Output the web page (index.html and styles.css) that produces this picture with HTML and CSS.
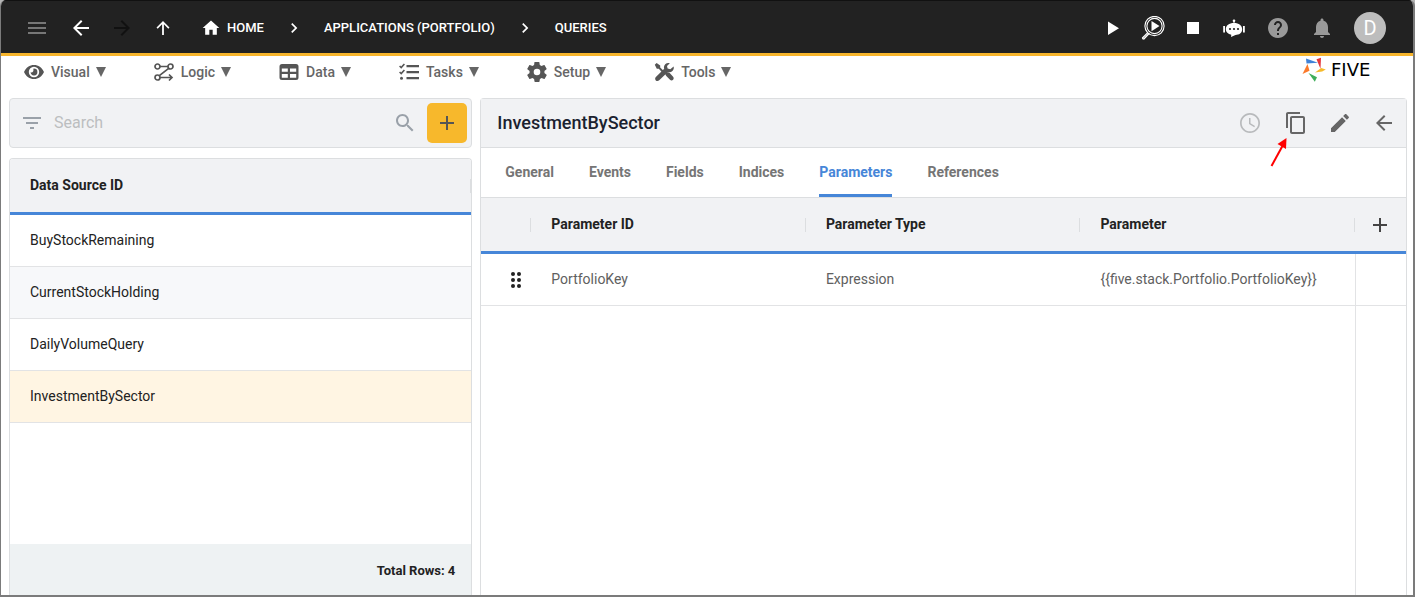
FILE: index.html
```html
<!DOCTYPE html>
<html lang="en">
<head>
<meta charset="utf-8">
<title>Five - Queries</title>
<link rel="stylesheet" href="styles.css">
</head>
<body>
<div class="app">
  <header class="topbar">
    <button class="icon-btn muted" aria-label="Menu"><svg viewBox="0 0 24 24"><path d="M3 18h18v-2H3v2zm0-5h18v-2H3v2zm0-7v2h18V6H3z"/></svg></button>
    <div class="history">
      <button class="icon-btn" aria-label="Back"><svg viewBox="0 0 24 24"><path d="M20 11H7.800l5.600-5.600L12 4l-8 8 8 8 1.400-1.400L7.800 13H20v-2z"/></svg></button>
      <button class="icon-btn off" aria-label="Forward" disabled><svg viewBox="0 0 24 24"><path d="M12 4l-1.410 1.410L16.170 11H4v2h12.170l-5.580 5.590L12 20l8-8z"/></svg></button>
      <button class="icon-btn" aria-label="Up"><svg viewBox="0 0 24 24"><path d="M5.500 11.500l1.200 1.200 4.400-4.400V19h1.800V8.300l4.400 4.400 1.200-1.200L12 5z"/></svg></button>
    </div>
    <nav class="crumbs" aria-label="Breadcrumb">
      <a href="#" class="home"><svg viewBox="0 0 24 24"><path d="M10 20v-6h4v6h5v-8h3L12 3 2 12h3v8z"/></svg>HOME</a>
      <svg class="sep" viewBox="0 0 24 24"><path d="M10 6L8.590 7.410 13.170 12l-4.580 4.590L10 18l6-6z"/></svg>
      <a href="#">APPLICATIONS (PORTFOLIO)</a>
      <svg class="sep" viewBox="0 0 24 24"><path d="M10 6L8.590 7.410 13.170 12l-4.580 4.590L10 18l6-6z"/></svg>
      <a href="#">QUERIES</a>
    </nav>
    <div class="run-tools">
      <button class="icon-btn" aria-label="Run"><svg viewBox="0 0 24 24"><path d="M7 5.500v13.500l11-6.750z"/></svg></button>
      <button class="icon-btn" aria-label="Inspect"><svg viewBox="0 0 24 24"><g fill="none" stroke="#fff"><circle cx="13.500" cy="10" r="9.600" stroke-width="1.100"/><circle cx="13.500" cy="10" r="7.600" stroke-width="1.100"/><path d="M6.800 16.600L1.200 22.200M8.300 17.200L2.600 23.200M1.200 22.200l1.400 1" stroke-width="1.300"/></g><path d="M10.500 5v10.200l8-5.100z"/></svg></button>
      <button class="icon-btn" aria-label="Stop"><svg viewBox="0 0 24 24"><path d="M6 6h12v12H6z"/></svg></button>
    </div>
    <div class="user-tools">
      <button class="icon-btn" aria-label="Assistant"><svg viewBox="0 0 24 24"><circle cx="12" cy="4.800" r="1.300"/><path d="M11.500 5h1v3h-1z"/><path d="M12 7c5 0 8.200 2.500 8.200 6.300S17 19 13.500 19L9 21l.3-2.200C6 18 3.800 16 3.800 13.200 3.800 9.500 7 7 12 7zM1.200 10h1.800v6.500H1.200zM21 10h1.800v6.500H21z"/><g fill="#222"><circle cx="8" cy="13" r="1.100"/><circle cx="12" cy="13" r="1.100"/><circle cx="16" cy="13" r="1.100"/></g></svg></button>
      <button class="icon-btn soft" aria-label="Help"><svg viewBox="0 0 24 24"><path d="M12 2C6.480 2 2 6.480 2 12s4.480 10 10 10 10-4.480 10-10S17.520 2 12 2zm1 17h-2v-2h2v2zm2.070-7.750l-.9.920C13.450 12.900 13 13.500 13 15h-2v-.5c0-1.100.45-2.100 1.170-2.830l1.240-1.260c.37-.36.59-.86.59-1.410 0-1.100-.9-2-2-2s-2 .9-2 2H8c0-2.210 1.790-4 4-4s4 1.790 4 4c0 .88-.36 1.680-.93 2.250z"/></svg></button>
      <button class="icon-btn soft" aria-label="Notifications"><svg viewBox="0 0 24 24"><path d="M12 22c1.100 0 2-.9 2-2h-4c0 1.100.89 2 2 2zm6-6v-5c0-3.070-1.640-5.640-4.500-6.320V4c0-.83-.67-1.500-1.500-1.500s-1.500.67-1.500 1.500v.68C7.630 5.360 6 7.920 6 11v5l-2 2v1h16v-1l-2-2z"/></svg></button>
      <button class="avatar" aria-label="Account">D</button>
    </div>
  </header>

  <div class="menubar">
    <nav class="menus" aria-label="Main">
      <button class="menu"><svg viewBox="0 0 20 20"><path fill-rule="evenodd" d="M10 3c4.300 0 8 2.500 10 7-2 4.500-5.700 7-10 7S2 14.500 0 10c2-4.500 5.700-7 10-7zm0 1.800a5.200 5.200 0 1 0 0 10.400 5.200 5.200 0 0 0 0-10.400z"/><path d="M10 6.600A3.400 3.400 0 1 1 6.600 10.300c1.900.6 3.400-1.200 2.700-3.600z"/></svg>Visual<span class="caret"></span></button>
      <button class="menu"><svg viewBox="0 0 20 20"><g fill="none" stroke="#555" stroke-width="1.700"><circle cx="3.500" cy="4.500" r="2.500"/><circle cx="16.500" cy="4.500" r="2.500"/><circle cx="3.500" cy="15.500" r="2.500"/><path d="M6 4.500h8M14.700 6.300L5.300 13.700M6 15.500h12M15 12.500l3 3-3 3"/></g></svg>Logic<span class="caret"></span></button>
      <button class="menu"><svg viewBox="0 0 20 20"><path fill-rule="evenodd" d="M3 2h14a2.500 2.500 0 0 1 2.500 2.500v11A2.500 2.500 0 0 1 17 18H3a2.500 2.500 0 0 1-2.500-2.500v-11A2.500 2.500 0 0 1 3 2zM2.800 6.500v3.200h6V6.500zm8.200 0v3.200h6.200V6.500zM2.800 12v3.700h6V12zM11 12v3.700h6.200V12z"/></svg>Data<span class="caret"></span></button>
      <button class="menu"><svg viewBox="0 0 20 20"><path d="M7.500 3H20v2.200H7.500zM7.500 9H20v2.200H7.500zM7.500 15H20v2.200H7.500z"/><circle cx="2.500" cy="16.300" r="1.500"/><path fill="none" stroke="#555" stroke-width="1.600" d="M.6 4l1.600 1.500L5.400 2M.6 10l1.600 1.500L5.400 8"/></svg>Tasks<span class="caret"></span></button>
      <button class="menu"><svg viewBox="2 2 20 20"><path d="M19.400 13c0-.3.100-.6.100-1s0-.7-.1-1l2.100-1.700c.2-.1.300-.4.100-.6l-2-3.500c-.1-.2-.4-.3-.6-.2l-2.500 1c-.5-.4-1.100-.7-1.700-1l-.4-2.600c0-.2-.2-.4-.5-.4h-4c-.2 0-.5.200-.5.400L9.100 5c-.6.300-1.200.6-1.700 1l-2.500-1c-.2-.1-.5 0-.6.200l-2 3.500c-.1.200-.1.500.1.600L4.600 11c0 .3-.1.700-.1 1s0 .7.100 1l-2.200 1.700c-.2.100-.2.400-.1.600l2 3.500c.1.200.4.300.6.200l2.500-1c.5.400 1.100.7 1.700 1l.4 2.600c0 .2.300.4.500.4h4c.3 0 .5-.2.500-.4l.4-2.600c.6-.3 1.200-.6 1.700-1l2.500 1c.2.100.5 0 .6-.2l2-3.500c.1-.2.100-.5-.1-.6zM12 15.300a3.300 3.300 0 1 1 0-6.600 3.300 3.300 0 0 1 0 6.600z"/></svg>Setup<span class="caret"></span></button>
      <button class="menu"><svg viewBox="0 0 20 20"><path d="M.8 2.800L2.600 1l3.600 2.400v2l3.600 3.500-1.500 1.500L4.800 6.800h-2zM11 11.500l2-1.200c1-.3 2 0 2.700.7l3.400 3.700c.8.900.8 2.200 0 3-.9.900-2.200.9-3.100 0L12.300 14c-.7-.7-.9-1.700-1.300-2.500z"/><path d="M19.600 4.500c.5 1.700 0 3.300-1.200 4.400-1.200 1.200-2.900 1.500-4.500 1L5.200 18.300c-1 1-2.500 1-3.400.1s-.9-2.400.1-3.400L10.200 6.700c-.6-1.600-.2-3.300 1-4.500C12.500 1 14.200.6 15.800 1.200L13 4l.6 2.600 2.700.7z"/></svg>Tools<span class="caret"></span></button>
    </nav>
    <a href="#" class="brand"><svg viewBox="0 0 24 25"><path fill="#3f82d8" d="M4 1.500l12 4.200-11.500.8z"/><path fill="#e4383b" d="M14.500 2.200L19 .8l-.5 11z"/><path fill="#fb7a2b" d="M5.500 7l2 6.800L.5 17z"/><path fill="#f6ba2c" d="M19.200 11l4.600 1.400-3.600 2.200-7.200 1z"/><path fill="#3fae5a" d="M6.500 16l8.500 4.200-2.200 4.500z"/></svg>FIVE</a>
  </div>

  <main class="workspace">
    <section class="left">
      <form class="search" role="search">
        <svg viewBox="0 0 24 24"><path d="M10 18h4v-2h-4v2zM3 6v2h18V6H3zm3 7h12v-2H6v2z"/></svg>
        <input type="search" placeholder="Search" aria-label="Search">
        <svg viewBox="0 0 24 24"><path d="M15.500 14h-.79l-.28-.27C15.410 12.590 16 11.110 16 9.500 16 5.910 13.090 3 9.500 3S3 5.910 3 9.500 5.910 16 9.500 16c1.610 0 3.090-.59 4.230-1.570l.27.280v.79l5 4.990L20.490 19l-4.990-5zm-6 0C7.010 14 5 11.990 5 9.500S7.010 5 9.500 5 14 7.010 14 9.500 11.990 14 9.500 14z"/></svg>
        <button type="button" class="add" aria-label="Add query"><svg viewBox="0 0 24 24"><path d="M19 13h-6v6h-2v-6H5v-2h6V5h2v6h6z"/></svg></button>
      </form>
      <div class="panel list">
        <table>
          <thead><tr><th scope="col" class="divided">Data Source ID</th></tr></thead>
          <tbody>
            <tr><td>BuyStockRemaining</td></tr>
            <tr class="alt"><td>CurrentStockHolding</td></tr>
            <tr><td>DailyVolumeQuery</td></tr>
            <tr class="selected"><td>InvestmentBySector</td></tr>
          </tbody>
        </table>
        <footer class="total">Total Rows: 4</footer>
      </div>
    </section>

    <section class="panel detail">
      <header class="detail-head">
        <h1>InvestmentBySector</h1>
        <button class="icon-btn faint" aria-label="History"><svg viewBox="0 0 24 24"><path d="M11.990 2C6.470 2 2 6.480 2 12s4.470 10 9.990 10C17.520 22 22 17.520 22 12S17.520 2 11.990 2zM12 20.300c-4.600 0-8.300-3.700-8.300-8.300S7.400 3.700 12 3.700s8.300 3.700 8.300 8.300-3.700 8.300-8.300 8.300zM12.500 7H11v6l5.250 3.150.75-1.230-4.500-2.670z"/></svg></button>
        <button class="icon-btn copy" aria-label="Copy"><svg viewBox="0 0 24 24"><path d="M16 1H4c-1.100 0-2 .9-2 2v14h2V3h12V1zm3 4H8c-1.100 0-2 .9-2 2v14c0 1.100.9 2 2 2h11c1.100 0 2-.9 2-2V7c0-1.100-.9-2-2-2zm0 16H8V7h11v14z"/></svg><svg class="pointer" viewBox="0 0 18 30"><path d="M1.500 29L13 8" stroke="#f00" stroke-width="2"/><path fill="#f00" d="M16.500 1L7.500 7l8.500 5z"/></svg></button>
        <button class="icon-btn" aria-label="Edit"><svg viewBox="0 0 24 24"><path d="M3 17.250V21h3.750L17.810 9.940l-3.750-3.750L3 17.250zM20.710 7.040c.39-.39.39-1.020 0-1.410l-2.340-2.340c-.39-.39-1.020-.39-1.410 0l-1.830 1.830 3.750 3.750 1.830-1.830z"/></svg></button>
        <button class="icon-btn" aria-label="Close"><svg viewBox="0 0 24 24"><path d="M20 11H7.830l5.590-5.590L12 4l-8 8 8 8 1.410-1.410L7.830 13H20v-2z"/></svg></button>
      </header>
      <nav class="tabs" role="tablist">
        <button role="tab">General</button>
        <button role="tab">Events</button>
        <button role="tab">Fields</button>
        <button role="tab">Indices</button>
        <button role="tab" class="active" aria-selected="true">Parameters</button>
        <button role="tab">References</button>
      </nav>
      <table class="params">
        <thead><tr>
          <th class="narrow divided"></th>
          <th scope="col" class="divided">Parameter ID</th>
          <th scope="col" class="divided">Parameter Type</th>
          <th scope="col" class="divided">Parameter</th>
          <th class="narrow last"><button class="icon-btn plus" aria-label="Add parameter"><svg viewBox="0 0 24 24"><path d="M19 13h-6v6h-2v-6H5v-2h6V5h2v6h6z"/></svg></button></th>
        </tr></thead>
        <tbody><tr>
          <td class="narrow grip"><svg viewBox="0 0 24 24"><circle cx="9" cy="6" r="2"/><circle cx="15" cy="6" r="2"/><circle cx="9" cy="12" r="2"/><circle cx="15" cy="12" r="2"/><circle cx="9" cy="18" r="2"/><circle cx="15" cy="18" r="2"/></svg></td>
          <td>PortfolioKey</td>
          <td>Expression</td>
          <td>{{five.stack.Portfolio.PortfolioKey}}</td>
          <td class="narrow action"></td>
        </tr></tbody>
      </table>
      <div class="rest"></div>
    </section>
  </main>
</div>
</body>
</html>
```

FILE: styles.css
```css
*, *::before, *::after { box-sizing: border-box; }

body {
  margin: 0;
  background: #b5b5b5;
  color: #222;
  font: 14px/20px Roboto, "Liberation Sans", sans-serif;
}

button, input { font: inherit; color: inherit; }
button { padding: 0; border: 0; background: none; cursor: pointer; }
a { color: inherit; text-decoration: none; }
svg { display: block; fill: currentColor; flex: none; }

.app {
  display: flex;
  flex-direction: column;
  height: 100vh;
  border: solid #7b7b7b;
  border-width: 0 2px 2px 1px;
  border-radius: 6px 6px 0 0;
  background: #fff;
  overflow: hidden;
}

.icon-btn { position: relative; width: 24px; height: 24px; flex: none; }
.icon-btn svg { width: 24px; height: 24px; }

/* Top bar */
.topbar {
  display: flex;
  align-items: center;
  flex: none;
  height: 56px;
  padding: 2px 27px 0 24px;
  border-top: 1px solid #111;
  border-bottom: 3px solid #f7b52c;
  background: #222;
  color: #fff;
}
.muted { color: #777; }
.off { color: #111; }
.soft { color: #999; }
.history { display: flex; gap: 17px; margin-left: 20px; }
.crumbs {
  display: flex;
  align-items: center;
  gap: 20px;
  margin-left: 26px;
  font-size: 13px;
  font-weight: 500;
}
.home { display: flex; align-items: center; gap: 6px; }
.home svg, .sep { width: 20px; height: 20px; }
.run-tools { display: flex; gap: 16px; margin-left: auto; }
.user-tools { display: flex; align-items: center; gap: 20px; margin-left: 17px; }
.avatar {
  width: 32px;
  height: 32px;
  border-radius: 50%;
  background: #bdbdbd;
  font-size: 20px;
}

/* Menu bar */
.menubar {
  display: flex;
  justify-content: space-between;
  flex: none;
  height: 32px;
  padding: 0 23px;
}
.menus { display: flex; gap: 48px; }
.menu {
  display: flex;
  align-items: center;
  color: #666;
  font-weight: 500;
}
.menu svg { width: 20px; height: 20px; margin-right: 7px; color: #555; }
.caret {
  margin-left: 6px;
  border: solid transparent;
  border-width: 10px 5px 0;
  border-top-color: #666;
}
.brand {
  display: flex;
  align-items: center;
  gap: 5px;
  width: 88px;
  height: 27px;
  color: #000;
  font: 18px/20px "DejaVu Sans", sans-serif;
}
.brand svg { width: 24px; height: 25px; }

/* Workspace */
.workspace {
  display: grid;
  grid-template-columns: minmax(0, 1fr) minmax(0, 2fr);
  gap: 8px;
  flex: 1;
  min-height: 0;
  padding: 10px 6px 0 8px;
}
.left { display: flex; flex-direction: column; gap: 10px; min-height: 0; }
.panel {
  display: flex;
  flex-direction: column;
  min-height: 0;
  border: 1px solid #dcdee0;
  border-bottom: 0;
  border-radius: 4px 4px 0 0;
  overflow: hidden;
}
.search {
  display: flex;
  align-items: center;
  flex: none;
  height: 50px;
  padding: 0 4px 0 10px;
  border: 1px solid #dcdee0;
  border-radius: 4px;
  background: #f1f2f4;
  color: #9aa1a9;
}
.search svg { width: 24px; height: 24px; }
.search input {
  flex: 1;
  min-width: 0;
  padding: 0 10px;
  border: 0;
  background: none;
  outline: 0;
  font-size: 16px;
}
.search input::placeholder { color: #bcbec0; }
.add {
  display: grid;
  place-items: center;
  width: 40px;
  height: 40px;
  margin-left: 10px;
  border-radius: 5px;
  background: #f7b82c;
}
.add svg { color: #555; }

table { width: 100%; border-spacing: 0; table-layout: fixed; }
th, td { padding: 0 20px 2px; text-align: left; }
th {
  position: relative;
  height: 56px;
  border-bottom: 3px solid #4686d8;
  background: #f1f2f4;
  font-weight: 700;
}
td { height: 52px; border-bottom: 1px solid #e2e3e5; }
.divided::after {
  content: "";
  position: absolute;
  top: 20px;
  right: -1px;
  width: 2px;
  height: 14px;
  background: #dcdee0;
}
.list { flex: 1; }
.alt { background: #f7f8fa; }
.selected { background: #fff5e3; }
.total {
  margin-top: auto;
  padding: 17px 16px 14px;
  background: #eef2f3;
  font-size: 13px;
  font-weight: 700;
  text-align: right;
}

/* Detail */
.detail-head {
  display: flex;
  align-items: center;
  gap: 20px;
  flex: none;
  height: 49px;
  padding: 0 10px 0 16px;
  border-bottom: 1px solid #dcdee0;
  background: #f1f2f4;
  color: #666;
}
.detail-head h1 {
  flex: 1;
  margin: 0;
  color: #1b2230;
  font-size: 18px;
  font-weight: 500;
}
.faint { margin-right: 2px; color: #b8babc; }
.copy .pointer {
  position: absolute;
  top: 26px;
  left: -14px;
  width: 18px;
  height: 30px;
}
.detail { overflow: visible; }
.tabs {
  display: flex;
  gap: 35px;
  flex: none;
  height: 50px;
  padding: 0 24px;
  border-bottom: 1px solid #dcdee0;
  color: #757575;
}
.tabs button {
  padding-bottom: 2px;
  border: solid transparent;
  border-width: 3px 0;
  font-weight: 700;
}
.tabs .active { color: #4686d8; border-bottom-color: #4686d8; }
.params { color: #606060; }
.params th { color: #222; }
.narrow { width: 50px; padding: 0 0 0 13px; }
.last, .action { width: 51px; }
.plus { display: block; color: #444; }
.grip svg { width: 24px; height: 24px; margin-left: 10px; color: #222; }
.action, .rest::after { border-left: 1px solid #e2e3e5; }
.rest { display: flex; justify-content: flex-end; flex: 1; }
.rest::after { content: ""; width: 51px; }
```
